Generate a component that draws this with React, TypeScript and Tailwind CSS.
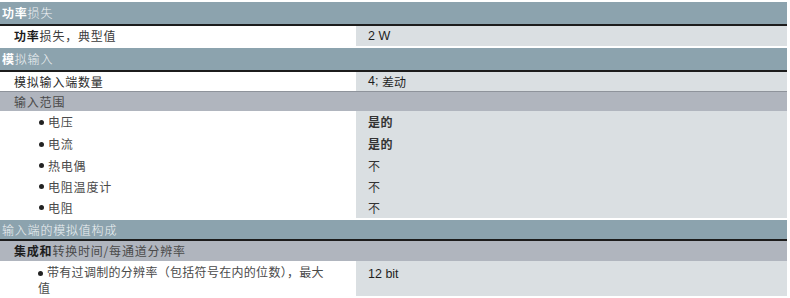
import React from 'react'

const cjk = "font-['Noto_Sans_CJK_SC','Noto_Sans',sans-serif]"
const latin = "font-['Liberation_Sans','Noto_Sans_CJK_SC',sans-serif]"

function SectionHeader({ bold, rest, className = '' }: { bold: string; rest: string; className?: string }) {
  return (
    <div
      className={`flex items-center bg-[#8ca3ae] border-b-2 border-[#1c1c1c] pl-[2px] text-[12px] tracking-[0.8px] text-white ${cjk} ${className}`}
    >
      <span className="font-bold">{bold}</span>
      <span className="font-light text-[#eef2f4]">{rest}</span>
    </div>
  )
}

function ValueRow({ label, value, className = '' }: { label: React.ReactNode; value: React.ReactNode; className?: string }) {
  return (
    <div className={`grid grid-cols-[355px_1fr] gap-px ${className}`}>
      <div className={`flex items-center pl-[14px] text-[12px] tracking-[0.8px] text-[#3a3a3a] ${cjk}`}>{label}</div>
      <div className={`flex items-center bg-[#dadfe2] pl-[12px] text-[12.5px] text-[#1e1e1e] ${latin}`}>{value}</div>
    </div>
  )
}

function SubHeader({ children, className = '' }: { children: React.ReactNode; className?: string }) {
  return (
    <div className={`flex items-center bg-[#b0b5be] pl-[14px] text-[12px] tracking-[0.8px] text-[#4a4a4a] ${cjk} ${className}`}>
      {children}
    </div>
  )
}

function Dot() {
  return <span className="mr-[4px] inline-block h-[5px] w-[5px] rounded-full bg-[#222] align-middle" />
}

const ranges = [
  { name: '电压', value: '是的', strong: true, h: 'h-[22px]' },
  { name: '电流', value: '是的', strong: true, h: 'h-[22px]' },
  { name: '热电偶', value: '不', strong: false, h: 'h-[21px]' },
  { name: '电阻温度计', value: '不', strong: false, h: 'h-[21px]' },
  { name: '电阻', value: '不', strong: false, h: 'h-[21px]' },
]

export default function App() {
  return (
    <div className="h-[298px] w-[790px] bg-white pt-[2px]">
      <div className="w-[787px]">
        {/* 功率损失 */}
        <SectionHeader bold="功率" rest="损失" className="h-[24px]" />
        <ValueRow
          className="h-[20px]"
          label={
            <>
              <span className="font-bold text-[#1a1a1a]">功率</span>
              <span>损失，典型值</span>
            </>
          }
          value="2 W"
        />

        {/* 模拟输入 */}
        <SectionHeader bold="模" rest="拟输入" className="mt-[2px] h-[24px]" />
        <ValueRow
          className="h-[19px]"
          label={<span className="text-[#2a2a2a]">模拟输入端数量</span>}
          value={
            <>
              4;&nbsp;<span className={`${cjk} text-[12px]`}>差动</span>
            </>
          }
        />
        <SubHeader className="h-[20px] border-t border-[#8e939b]">输入范围</SubHeader>
        {ranges.map((r) => (
          <div key={r.name} className={`grid grid-cols-[355px_1fr] gap-px ${r.h}`}>
            <div className={`flex items-center pl-[39px] text-[12px] tracking-[0.8px] text-[#4a4a4a] ${cjk}`}>
              <Dot />
              {r.name}
            </div>
            <div
              className={`flex items-center bg-[#dadfe2] pl-[12px] text-[12px] tracking-[0.5px] ${cjk} ${
                r.strong ? 'font-bold text-[#333]' : 'text-[#333]'
              }`}
            >
              {r.value}
            </div>
          </div>
        ))}

        {/* 输入端的模拟值构成 */}
        <SectionHeader bold="" rest="输入端的模拟值构成" className="mt-[2px] h-[21px]" />
        <SubHeader className="h-[20px]">
          <span className="font-bold text-[#1e1e1e]">集成和</span>
          <span>转换时间/每通道分辨率</span>
        </SubHeader>
        <div className="grid h-[34px] grid-cols-[355px_1fr] gap-px">
          <div className={`pl-[38px] pr-[20px] pt-[3px] text-[12px] leading-[16px] tracking-[0.3px] text-[#4a4a4a] ${cjk}`}>
            <Dot />
            带有过调制的分辨率（包括符号在内的位数），最大值
          </div>
          <div className={`bg-[#dadfe2] pl-[12px] pt-[4px] text-[12.5px] text-[#1e1e1e] ${latin}`}>12 bit</div>
        </div>
      </div>
    </div>
  )
}
